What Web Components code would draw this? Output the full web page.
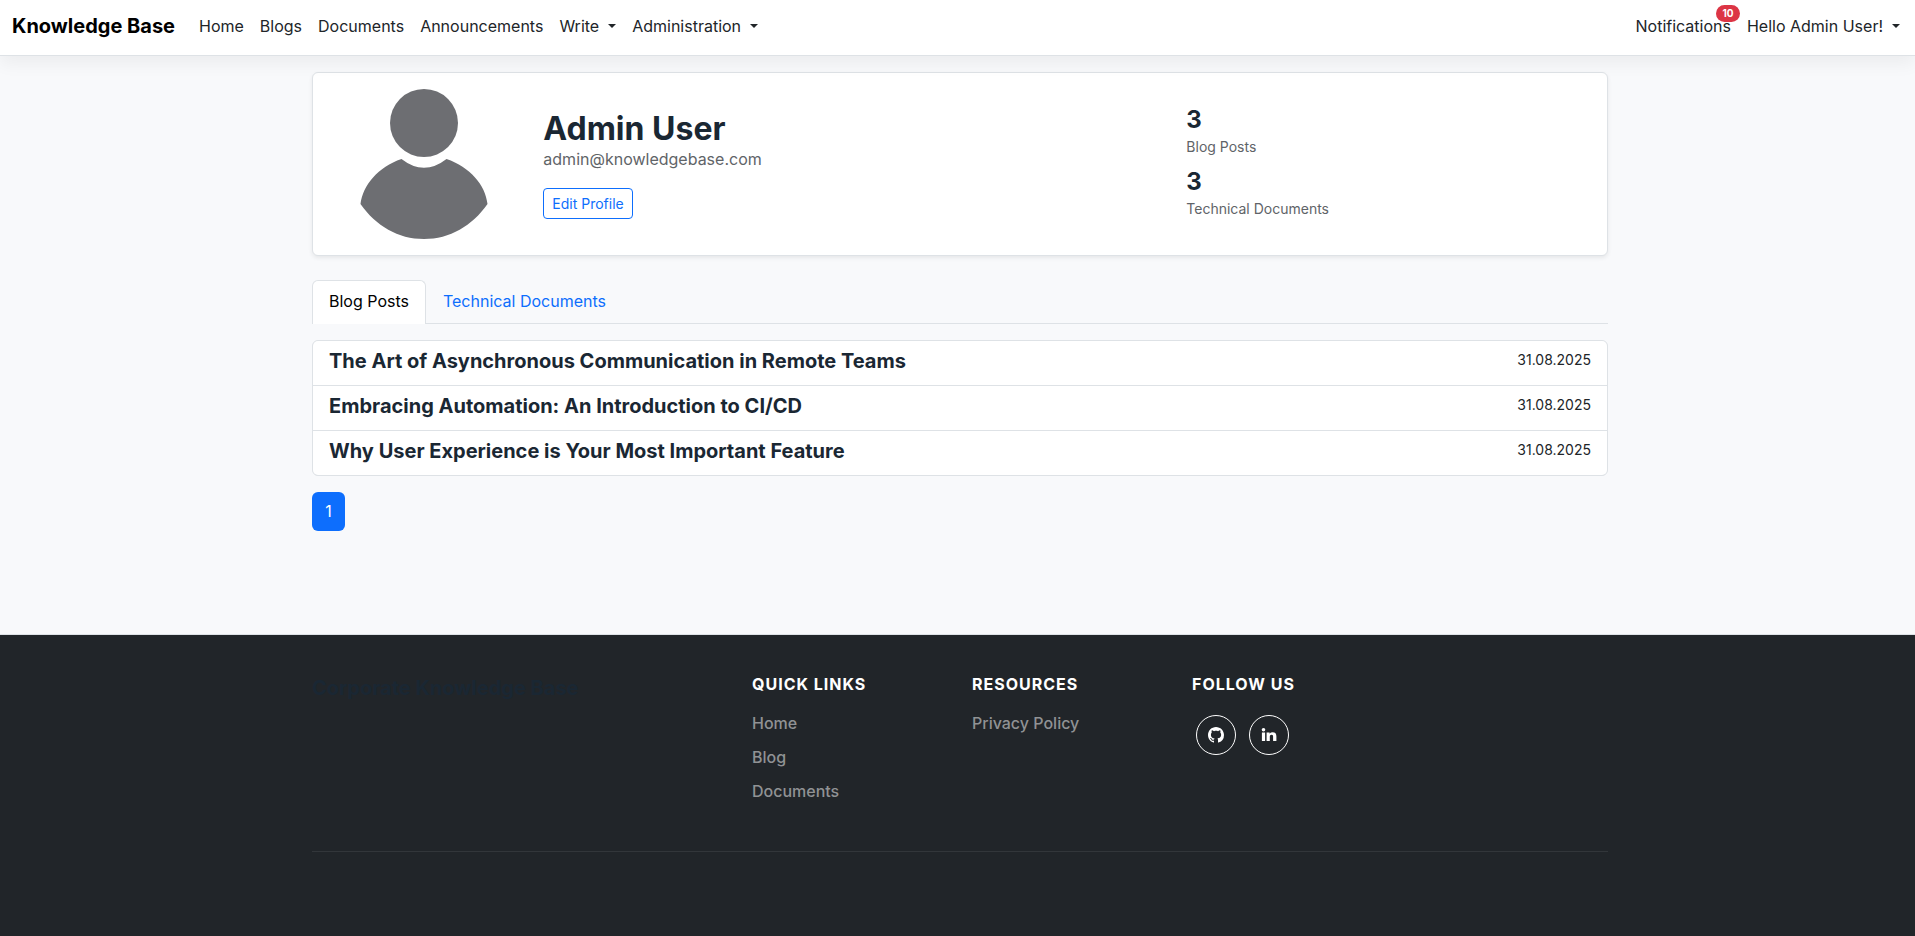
<!DOCTYPE html>
<html lang="en">
<head>
<meta charset="utf-8">
<meta name="viewport" content="width=device-width, initial-scale=1">
<title>Admin User - Knowledge Base</title>
<style>
  body {
    margin: 0;
    min-height: 100vh;
    display: flex;
    flex-direction: column;
    background: #f8f9fb;
    color: #212529;
    font: 400 16px/24px Inter, "Liberation Sans", sans-serif;
    --heading: #1a2733;
    --line: #dee2e6;
    --primary: #0d6efd;
    --edge: 5px;
  }
</style>
</head>
<body>
<kb-navbar>
  <kb-nav-link>Home</kb-nav-link>
  <kb-nav-link>Blogs</kb-nav-link>
  <kb-nav-link>Documents</kb-nav-link>
  <kb-nav-link>Announcements</kb-nav-link>
  <kb-nav-menu>Write</kb-nav-menu>
  <kb-nav-menu>Administration</kb-nav-menu>
  <kb-nav-link slot="end" badge="10">Notifications</kb-nav-link>
  <kb-nav-menu slot="end">Hello Admin User!</kb-nav-menu>
</kb-navbar>
<kb-main>
  <kb-profile name="Admin User" email="admin@knowledgebase.com">
    <kb-stat value="3">Blog Posts</kb-stat>
    <kb-stat value="3">Technical Documents</kb-stat>
  </kb-profile>
  <kb-tabs></kb-tabs>
  <kb-list>
    <kb-item date="31.08.2025">The Art of Asynchronous Communication in Remote Teams</kb-item>
    <kb-item date="31.08.2025">Embracing Automation: An Introduction to CI/CD</kb-item>
    <kb-item date="31.08.2025">Why User Experience is Your Most Important Feature</kb-item>
  </kb-list>
  <kb-pagination></kb-pagination>
</kb-main>
<kb-footer>
  <kb-footer-group heading="Quick Links">
    <kb-footer-link>Home</kb-footer-link>
    <kb-footer-link>Blog</kb-footer-link>
    <kb-footer-link>Documents</kb-footer-link>
  </kb-footer-group>
  <kb-footer-group heading="Resources">
    <kb-footer-link>Privacy Policy</kb-footer-link>
  </kb-footer-group>
  <kb-footer-group heading="Follow Us">
    <kb-social></kb-social>
  </kb-footer-group>
</kb-footer>

<script>
const define = (name, render) => customElements.define(name, class extends HTMLElement {
  constructor() {
    super();
    this.attachShadow({ mode: 'open' }).innerHTML =
      '<style>*{box-sizing:border-box}h2,h3,h4,p,ul{margin:0;padding:0}a{color:inherit;text-decoration:none}button{font:inherit;color:inherit;background:none;border:0;cursor:pointer}</style>'
      + render(this);
  }
});

define('kb-navbar', () => `
  <style>
    :host { display: block; position: relative; background: #fff; border-bottom: 1px solid var(--line); box-shadow: 0 8px 16px rgba(0,0,0,.05); }
    nav { display: flex; align-items: center; padding: 6px 7px 9px 12px; min-height: 55px; }
    .brand { font-size: 20px; line-height: 30px; font-weight: 700; color: #000; margin-right: 16px; }
    .group { display: flex; }
    .end { margin-left: auto; }
  </style>
  <nav><a class="brand" href="#">Knowledge Base</a>
    <div class="group"><slot></slot></div>
    <div class="group end"><slot name="end"></slot></div>
  </nav>`);

define('kb-nav-link', el => `
  <style>
    :host { display: block; }
    a { display: block; position: relative; padding: 8px; }
    .badge { position: absolute; top: -1px; right: -1px; min-width: 24px; padding: 0 6px; border-radius: 9px;
      background: #dc3545; color: #fff; font-size: 10px; line-height: 17px; font-weight: 700; text-align: center; }
  </style>
  <a href="#"><slot></slot>${el.hasAttribute('badge') ? `<span class="badge">${el.getAttribute('badge')}</span>` : ''}</a>`);

define('kb-nav-menu', () => `
  <style>
    :host { display: block; }
    button { display: flex; align-items: center; gap: 9px; padding: 8px; }
    i { border: 4px solid transparent; border-top-color: currentColor; border-bottom: 0; width: 0; }
  </style>
  <button type="button" aria-haspopup="true"><slot></slot><i></i></button>`);

define('kb-main', () => `
  <style>
    :host { display: block; padding: 16px 12px 103px calc(12px + var(--edge)); }
    main { max-width: 1296px; margin: 0 auto; }
  </style>
  <main><slot></slot></main>`);

define('kb-profile', el => `
  <style>
    :host { display: grid; grid-template-columns: 2fr 6fr 4fr; align-items: center; padding: 16px 4px; margin-bottom: 24px;
      background: #fff; border: 1px solid var(--line); border-radius: 6px; box-shadow: 0 2px 4px rgba(0,0,0,.075); }
    svg { display: block; width: 150px; height: 150px; margin: 0 auto; fill: #6d6e72; }
    .who, .stats { padding: 0 12px; }
    h2 { font-size: 32px; line-height: 37px; font-weight: 700; color: var(--heading); }
    p { color: #5f6468; margin-bottom: 17px; }
    .edit { display: inline-block; vertical-align: top; padding: 4px 8px; border: 1px solid var(--primary); border-radius: 4px;
      color: var(--primary); font-size: 14px; line-height: 21px; }
    .stats { display: grid; gap: 8px; padding-bottom: 2px; }
  </style>
  <svg viewBox="0 0 150 150" role="img" aria-label="Profile picture">
    <circle cx="75" cy="34" r="34"/>
    <path d="M52.500 70Q75 87.500 97.500 70C121 78 136.500 96 138.500 115C123 137 101 150 75 150S27 137 11.500 115C14 96 29 78 52.500 70Z"/>
  </svg>
  <div class="who">
    <h2>${el.getAttribute('name')}</h2>
    <p>${el.getAttribute('email')}</p>
    <a class="edit" href="#">Edit Profile</a>
  </div>
  <div class="stats"><slot></slot></div>`);

define('kb-stat', el => `
  <style>
    :host { display: block; }
    h4 { font-size: 24px; line-height: 29px; font-weight: 700; color: var(--heading); }
    p { font-size: 14px; line-height: 25px; color: #5f6468; }
  </style>
  <h4>${el.getAttribute('value')}</h4><p><slot></slot></p>`);

define('kb-tabs', () => `
  <style>
    :host { display: flex; border-bottom: 1px solid var(--line); margin-bottom: 16px; }
    button { padding: 7px 16px 9px; line-height: 26px; border: 1px solid transparent; border-bottom: 0; border-radius: 6px 6px 0 0; color: var(--primary); }
    [aria-selected="true"] { color: #000; background: #fff; border-color: var(--line); margin-bottom: -1px; padding-bottom: 10px; }
  </style>
  <button type="button" role="tab" aria-selected="true">Blog Posts</button>
  <button type="button" role="tab" aria-selected="false">Technical Documents</button>`);

define('kb-list', () => `
  <style>
    :host { display: grid; gap: 1px; margin-bottom: 16px; background: var(--line); border: 1px solid var(--line); border-radius: 6px; overflow: hidden; }
  </style><slot></slot>`);

define('kb-item', el => `
  <style>
    :host { display: block; background: #fff; }
    a { display: flex; justify-content: space-between; padding: 8px 16px 12px; }
    h3 { font-size: 20px; line-height: 24px; font-weight: 700; color: var(--heading); }
    time { font-size: 14px; line-height: 22px; }
  </style>
  <a href="#"><h3><slot></slot></h3><time>${el.getAttribute('date')}</time></a>`);

define('kb-pagination', () => `
  <style>
    :host { display: flex; }
    a { padding: 7px 12px; min-width: 33px; line-height: 25px; text-align: center; border-radius: 6px; color: #fff; background: var(--primary); }
  </style>
  <a href="#" aria-current="page">1</a>`);

define('kb-footer', () => `
  <style>
    :host { display: block; flex: 1; padding: 37px 12px 83px calc(12px + var(--edge)); background: #212529; border-top: 1px solid var(--line); }
    footer { max-width: 1296px; margin: 0 auto; }
    .columns { display: grid; grid-template-columns: 416px repeat(3, 196px); gap: 24px; min-height: 180px; border-bottom: 1px solid #32363a; }
    h3 { font-size: 20px; line-height: 24px; font-weight: 700; color: var(--heading); margin-top: 4px; }
  </style>
  <footer><div class="columns"><h3>Corporate Knowledge Base</h3><slot></slot></div></footer>`);

define('kb-footer-group', el => `
  <style>
    :host { display: block; }
    h4 { font-size: 16px; line-height: 24px; font-weight: 700; letter-spacing: 1px; text-transform: uppercase; color: #fff; margin-bottom: 15px; }
  </style>
  <h4>${el.getAttribute('heading')}</h4><slot></slot>`);

define('kb-footer-link', () => `
  <style>
    :host { display: block; margin-bottom: 10px; }
    a { font-weight: 500; color: #909294; }
  </style>
  <a href="#"><slot></slot></a>`);

define('kb-social', () => `
  <style>
    :host { display: flex; gap: 13px; padding: 4px 0 0 4px; }
    a { width: 40px; height: 40px; display: grid; place-items: center; border: 1px solid #fff; border-radius: 50%; color: #fff; }
    svg { width: 16px; height: 16px; fill: currentColor; }
  </style>
  <a href="#" aria-label="GitHub"><svg viewBox="0 0 16 16"><path d="M8 0C3.580 0 0 3.580 0 8c0 3.540 2.290 6.530 5.470 7.590.4.070.55-.17.55-.38 0-.19-.01-.82-.01-1.490-2.010.37-2.530-.49-2.690-.94-.09-.23-.48-.94-.82-1.130-.28-.15-.68-.52-.01-.53.63-.01 1.080.58 1.230.82.72 1.210 1.870.87 2.330.66.07-.52.28-.87.51-1.070-1.780-.2-3.640-.89-3.640-3.950 0-.87.31-1.590.82-2.150-.08-.2-.36-1.020.08-2.120 0 0 .67-.21 2.200.82.64-.18 1.320-.27 2-.27s1.360.09 2 .27c1.530-1.040 2.200-.82 2.200-.82.44 1.100.16 1.920.08 2.120.51.56.82 1.270.82 2.150 0 3.070-1.870 3.750-3.650 3.950.29.25.54.73.54 1.480 0 1.070-.01 1.930-.01 2.200 0 .21.15.46.55.38A8.010 8.010 0 0 0 16 8c0-4.420-3.580-8-8-8Z"/></svg></a>
  <a href="#" aria-label="LinkedIn"><svg viewBox="0 0 16 16"><circle cx="2.500" cy="2.700" r="1.800"/><path d="M.900 5.500h3.200V14H.9ZM5.600 5.500h3v1.200c.5-.9 1.500-1.400 2.900-1.400 2.900 0 3.900 1.500 3.900 4.200V14h-3.300V9.800c0-1.200-.3-2-1.500-2-1.300 0-1.800.9-1.800 2.200v4H5.600Z"/></svg></a>`);
</script>
</body>
</html>
